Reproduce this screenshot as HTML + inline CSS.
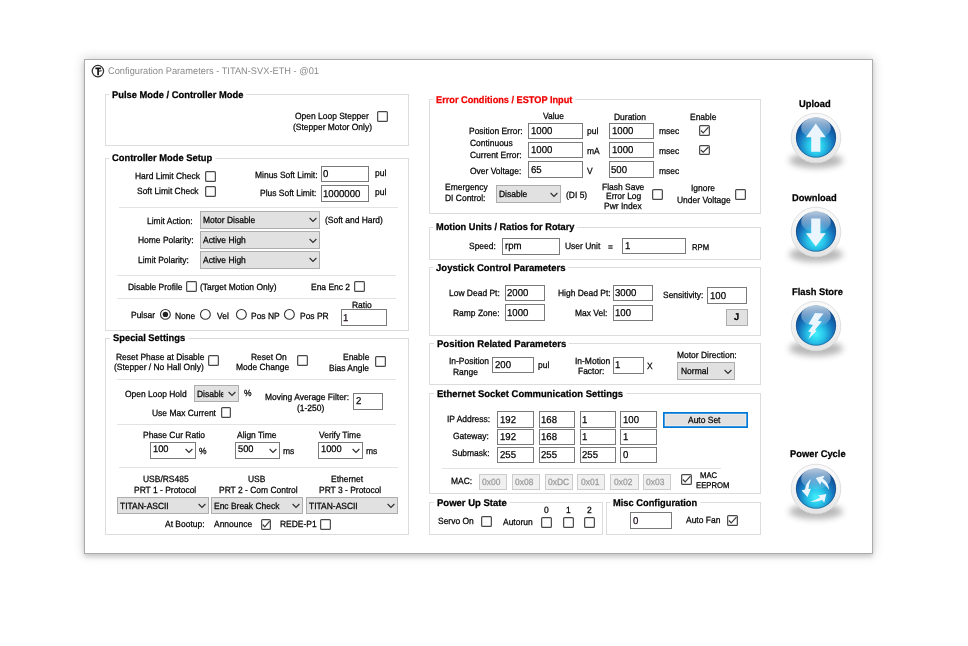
<!DOCTYPE html>
<html><head><meta charset="utf-8"><style>
html,body{margin:0;padding:0;background:#fff;width:968px;height:646px;overflow:hidden;position:relative}
body{font-family:"Liberation Sans", sans-serif;color:#000}
.t{position:absolute;white-space:nowrap;transform-origin:0 0;-webkit-text-stroke-width:0.25px;text-rendering:geometricPrecision}
.r{position:absolute;border:1px solid #7a7a7a;box-sizing:content-box}
.s{position:absolute;overflow:visible}
#win{position:absolute;left:84px;top:59px;width:787px;height:493px;border:1px solid #ababab;background:#fff;box-shadow:0 0 10px 1px rgba(0,0,0,0.16),0 3px 4px rgba(0,0,0,0.13)}
</style></head><body>
<svg width="0" height="0" style="position:absolute"><defs>
<linearGradient id="ring" x1="0" y1="0" x2="0" y2="1"><stop offset="0" stop-color="#fafafa"/><stop offset="0.6" stop-color="#f0f0f0"/><stop offset="1" stop-color="#e2e2e2"/></linearGradient>
<radialGradient id="blue" cx="50%" cy="70%" r="58%" fx="50%" fy="72%"><stop offset="0" stop-color="#44f2fa"/><stop offset="0.35" stop-color="#28c6ea"/><stop offset="0.75" stop-color="#1674bd"/><stop offset="1" stop-color="#10559c"/></radialGradient>
<linearGradient id="gloss" x1="0" y1="0" x2="0" y2="1"><stop offset="0" stop-color="#fff" stop-opacity="0.7"/><stop offset="1" stop-color="#fff" stop-opacity="0.08"/></linearGradient>
<filter id="blur" x="-50%" y="-80%" width="200%" height="260%"><feGaussianBlur stdDeviation="3"/></filter>
<g id="orb">
<ellipse cx="32" cy="54.5" rx="27" ry="7.5" fill="#3a3a3a" opacity="0.36" filter="url(#blur)"/>
<circle cx="32" cy="32" r="24.8" fill="url(#ring)" stroke="#d8d8d8" stroke-width="0.8"/>
<circle cx="32" cy="31.6" r="20.0" fill="url(#blue)"/>
<circle cx="32" cy="31.6" r="19.7" fill="none" stroke="#0a3a72" stroke-opacity="0.6" stroke-width="0.8"/>
<ellipse cx="32" cy="21.8" rx="14.8" ry="10.6" fill="url(#gloss)"/>
</g></defs></svg>
<div id="win"></div>
<svg class="s" style="left:90px;top:63px" width="16" height="16" viewBox="0 0 16 16"><circle cx="7.9" cy="8.1" r="5.7" fill="#fff" stroke="#303030" stroke-width="1.25"/><path d="M5.4 5.4 H10.9 M8.1 5.4 V12.2" stroke="#111" stroke-width="1.7" fill="none"/><path d="M8.9 8.2 L11.6 7.6" stroke="#333" stroke-width="1.1" fill="none"/></svg>
<div class="t" style="left:108px;top:67px;font-size:9.6px;line-height:9.6px;color:#8a8a8a;transform:scaleX(0.966);-webkit-text-stroke-width:0;">Configuration Parameters - TITAN-SVX-ETH - @01</div>
<div class="r" style="left:105px;top:94px;width:302px;height:50px;border-color:#dcdcdc;background:transparent;"></div>
<div class="t" style="left:112.4px;top:90.95px;font-size:9.7px;line-height:9.7px;font-weight:bold;transform:scaleX(0.965);"><span style="background:#fff;padding:0 3px 0 3px;margin-left:-3px">Pulse Mode / Controller Mode</span></div>
<div class="t" style="left:295px;top:111.8px;font-size:9px;line-height:9px;transform:scaleX(0.94);">Open Loop Stepper</div>
<svg class="s" style="left:377px;top:111px" width="11" height="11" viewBox="0 0 11 11"><rect x="0.65" y="0.65" width="9.7" height="9.7" rx="0.9" fill="#fff" stroke="#484848" stroke-width="1.2"/></svg>
<div class="t" style="left:292.7px;top:122.8px;font-size:9px;line-height:9px;transform:scaleX(0.94);">(Stepper Motor Only)</div>
<div class="r" style="left:105px;top:158px;width:302px;height:171px;border-color:#dcdcdc;background:transparent;"></div>
<div class="t" style="left:112.4px;top:153.95px;font-size:9.7px;line-height:9.7px;font-weight:bold;transform:scaleX(0.965);"><span style="background:#fff;padding:0 3px 0 3px;margin-left:-3px">Controller Mode Setup</span></div>
<div class="t" style="left:134.8px;top:171.8px;font-size:9px;line-height:9px;transform:scaleX(0.94);">Hard Limit Check</div>
<svg class="s" style="left:205px;top:171px" width="11" height="11" viewBox="0 0 11 11"><rect x="0.65" y="0.65" width="9.7" height="9.7" rx="0.9" fill="#fff" stroke="#484848" stroke-width="1.2"/></svg>
<div class="t" style="left:137px;top:186.8px;font-size:9px;line-height:9px;transform:scaleX(0.94);">Soft Limit Check</div>
<svg class="s" style="left:205px;top:186px" width="11" height="11" viewBox="0 0 11 11"><rect x="0.65" y="0.65" width="9.7" height="9.7" rx="0.9" fill="#fff" stroke="#484848" stroke-width="1.2"/></svg>
<div class="t" style="left:254.6px;top:170.8px;font-size:9px;line-height:9px;transform:scaleX(0.94);">Minus Soft Limit:</div>
<div class="r" style="left:321px;top:166px;width:46px;height:14px;border-color:#7a7a7a;background:#fff;"></div>
<div class="t" style="left:323.3px;top:169.8px;font-size:10px;line-height:10px;transform:scaleX(0.96);">0</div>
<div class="t" style="left:374.7px;top:168.8px;font-size:9px;line-height:9px;transform:scaleX(0.94);">pul</div>
<div class="t" style="left:260.1px;top:188.8px;font-size:9px;line-height:9px;transform:scaleX(0.94);">Plus Soft Limit:</div>
<div class="r" style="left:321px;top:185px;width:46px;height:15px;border-color:#7a7a7a;background:#fff;"></div>
<div class="t" style="left:323.3px;top:189.8px;font-size:10px;line-height:10px;transform:scaleX(0.96);">1000000</div>
<div class="t" style="left:374.7px;top:187.8px;font-size:9px;line-height:9px;transform:scaleX(0.94);">pul</div>
<div class="r" style="left:119px;top:206.9px;width:278.5px;height:1px;border:0;background:#e3e3e3"></div>
<div class="t" style="left:146.8px;top:216.8px;font-size:9px;line-height:9px;transform:scaleX(0.94);">Limit Action:</div>
<div class="r" style="left:200px;top:211px;width:118px;height:16px;border-color:#adadad;background:#e1e1e1;"></div>
<div class="t" style="left:203.3px;top:215.8px;font-size:9px;line-height:9px;transform:scaleX(0.94);">Motor Disable</div>
<svg class="s" style="left:309.4px;top:217.4px" width="8" height="6"><path d="M0.6 1 L4 4.4 L7.4 1" fill="none" stroke="#2a2a2a" stroke-width="1.1"/></svg>
<div class="t" style="left:324.8px;top:215.8px;font-size:9px;line-height:9px;transform:scaleX(0.94);">(Soft and Hard)</div>
<div class="t" style="left:137.7px;top:235.8px;font-size:9px;line-height:9px;transform:scaleX(0.94);">Home Polarity:</div>
<div class="r" style="left:200px;top:231px;width:118px;height:16px;border-color:#adadad;background:#e1e1e1;"></div>
<div class="t" style="left:203.3px;top:235.8px;font-size:9px;line-height:9px;transform:scaleX(0.94);">Active High</div>
<svg class="s" style="left:309.4px;top:237.5px" width="8" height="6"><path d="M0.6 1 L4 4.4 L7.4 1" fill="none" stroke="#2a2a2a" stroke-width="1.1"/></svg>
<div class="t" style="left:137.7px;top:255.8px;font-size:9px;line-height:9px;transform:scaleX(0.94);">Limit Polarity:</div>
<div class="r" style="left:200px;top:251px;width:118px;height:16px;border-color:#adadad;background:#e1e1e1;"></div>
<div class="t" style="left:203.3px;top:255.8px;font-size:9px;line-height:9px;transform:scaleX(0.94);">Active High</div>
<svg class="s" style="left:309.4px;top:257.35px" width="8" height="6"><path d="M0.6 1 L4 4.4 L7.4 1" fill="none" stroke="#2a2a2a" stroke-width="1.1"/></svg>
<div class="r" style="left:117.4px;top:274.7px;width:278.6px;height:1px;border:0;background:#e3e3e3"></div>
<div class="t" style="left:128.1px;top:282.8px;font-size:9px;line-height:9px;transform:scaleX(0.94);">Disable Profile</div>
<svg class="s" style="left:186px;top:281px" width="11" height="11" viewBox="0 0 11 11"><rect x="0.65" y="0.65" width="9.7" height="9.7" rx="0.9" fill="#fff" stroke="#484848" stroke-width="1.2"/></svg>
<div class="t" style="left:200.3px;top:282.8px;font-size:9px;line-height:9px;transform:scaleX(0.94);">(Target Motion Only)</div>
<div class="t" style="left:310.7px;top:282.8px;font-size:9px;line-height:9px;transform:scaleX(0.94);">Ena Enc 2</div>
<svg class="s" style="left:354px;top:281px" width="11" height="11" viewBox="0 0 11 11"><rect x="0.65" y="0.65" width="9.7" height="9.7" rx="0.9" fill="#fff" stroke="#484848" stroke-width="1.2"/></svg>
<div class="r" style="left:117.4px;top:297.9px;width:278.3px;height:1px;border:0;background:#e3e3e3"></div>
<div class="t" style="left:352.4px;top:300.8px;font-size:9px;line-height:9px;transform:scaleX(0.94);">Ratio</div>
<div class="t" style="left:131.4px;top:310.8px;font-size:9px;line-height:9px;transform:scaleX(0.94);">Pulsar</div>
<svg class="s" style="left:158.8px;top:308.2px" width="12.8" height="12.8"><circle cx="6.4" cy="6.4" r="4.9" fill="#fff" stroke="#333" stroke-width="1.1"/><circle cx="6.4" cy="6.4" r="2.7" fill="#222"/></svg>
<div class="t" style="left:175.2px;top:311.8px;font-size:9px;line-height:9px;transform:scaleX(0.94);">None</div>
<svg class="s" style="left:199.3px;top:308.2px" width="12.8" height="12.8"><circle cx="6.4" cy="6.4" r="4.9" fill="#fff" stroke="#333" stroke-width="1.1"/></svg>
<div class="t" style="left:216.5px;top:311.8px;font-size:9px;line-height:9px;transform:scaleX(0.94);">Vel</div>
<svg class="s" style="left:234.7px;top:308.2px" width="12.8" height="12.8"><circle cx="6.4" cy="6.4" r="4.9" fill="#fff" stroke="#333" stroke-width="1.1"/></svg>
<div class="t" style="left:251.2px;top:311.8px;font-size:9px;line-height:9px;transform:scaleX(0.94);">Pos NP</div>
<svg class="s" style="left:282.8px;top:308.2px" width="12.8" height="12.8"><circle cx="6.4" cy="6.4" r="4.9" fill="#fff" stroke="#333" stroke-width="1.1"/></svg>
<div class="t" style="left:299.5px;top:311.8px;font-size:9px;line-height:9px;transform:scaleX(0.94);">Pos PR</div>
<div class="r" style="left:341px;top:309px;width:44px;height:15px;border-color:#7a7a7a;background:#fff;"></div>
<div class="t" style="left:343.1px;top:313.8px;font-size:10px;line-height:10px;color:#1a0818;transform:scaleX(0.96);">1</div>
<div class="r" style="left:105px;top:338px;width:302px;height:195px;border-color:#dcdcdc;background:transparent;"></div>
<div class="t" style="left:112.9px;top:333.95px;font-size:9.7px;line-height:9.7px;font-weight:bold;transform:scaleX(0.965);"><span style="background:#fff;padding:0 3px 0 3px;margin-left:-3px">Special Settings</span></div>
<div class="t" style="left:116px;top:352.8px;font-size:9px;line-height:9px;transform:scaleX(0.94);">Reset Phase at Disable</div>
<div class="t" style="left:113.7px;top:362.8px;font-size:9px;line-height:9px;transform:scaleX(0.94);">(Stepper / No Hall Only)</div>
<svg class="s" style="left:208px;top:355px" width="11" height="11" viewBox="0 0 11 11"><rect x="0.65" y="0.65" width="9.7" height="9.7" rx="0.9" fill="#fff" stroke="#484848" stroke-width="1.2"/></svg>
<div class="t" style="left:251.2px;top:352.8px;font-size:9px;line-height:9px;transform:scaleX(0.94);">Reset On</div>
<div class="t" style="left:235.9px;top:362.8px;font-size:9px;line-height:9px;transform:scaleX(0.94);">Mode Change</div>
<svg class="s" style="left:297px;top:355px" width="11" height="11" viewBox="0 0 11 11"><rect x="0.65" y="0.65" width="9.7" height="9.7" rx="0.9" fill="#fff" stroke="#484848" stroke-width="1.2"/></svg>
<div class="t" style="left:342.5px;top:352.8px;font-size:9px;line-height:9px;transform:scaleX(0.94);">Enable</div>
<div class="t" style="left:329.3px;top:363.8px;font-size:9px;line-height:9px;transform:scaleX(0.94);">Bias Angle</div>
<svg class="s" style="left:375px;top:356px" width="11" height="11" viewBox="0 0 11 11"><rect x="0.65" y="0.65" width="9.7" height="9.7" rx="0.9" fill="#fff" stroke="#484848" stroke-width="1.2"/></svg>
<div class="r" style="left:117.4px;top:378.6px;width:278.3px;height:1px;border:0;background:#e3e3e3"></div>
<div class="t" style="left:124.8px;top:389.8px;font-size:9px;line-height:9px;transform:scaleX(0.94);">Open Loop Hold</div>
<div class="r" style="left:194px;top:385px;width:43px;height:15px;border-color:#adadad;background:#e1e1e1;"></div>
<div class="t" style="left:197px;top:389.8px;font-size:9px;line-height:9px;transform:scaleX(0.94);"><span style="display:inline-block;width:28px;overflow:hidden;vertical-align:top">Disable</span></div>
<svg class="s" style="left:228.2px;top:391.1px" width="8" height="6"><path d="M0.6 1 L4 4.4 L7.4 1" fill="none" stroke="#2a2a2a" stroke-width="1.1"/></svg>
<div class="t" style="left:244.1px;top:388.8px;font-size:9px;line-height:9px;transform:scaleX(0.94);">%</div>
<div class="t" style="left:264.8px;top:392.8px;font-size:9px;line-height:9px;transform:scaleX(0.94);">Moving Average Filter:</div>
<div class="t" style="left:297px;top:403.8px;font-size:9px;line-height:9px;transform:scaleX(0.94);">(1-250)</div>
<div class="r" style="left:353px;top:393px;width:28px;height:15px;border-color:#7a7a7a;background:#fff;"></div>
<div class="t" style="left:355.5px;top:396.8px;font-size:10px;line-height:10px;transform:scaleX(0.96);">2</div>
<div class="t" style="left:152.1px;top:408.8px;font-size:9px;line-height:9px;transform:scaleX(0.94);">Use Max Current</div>
<svg class="s" style="left:221px;top:407px" width="10" height="11" viewBox="0 0 10 11"><rect x="0.65" y="0.65" width="8.7" height="9.7" rx="0.9" fill="#fff" stroke="#484848" stroke-width="1.2"/></svg>
<div class="r" style="left:117.4px;top:424px;width:278.3px;height:1px;border:0;background:#e3e3e3"></div>
<div class="t" style="left:142.6px;top:430.8px;font-size:9px;line-height:9px;transform:scaleX(0.94);">Phase Cur Ratio</div>
<div class="t" style="left:236.9px;top:430.8px;font-size:9px;line-height:9px;transform:scaleX(0.94);">Align Time</div>
<div class="t" style="left:319.3px;top:430.8px;font-size:9px;line-height:9px;transform:scaleX(0.94);">Verify Time</div>
<div class="r" style="left:150px;top:442px;width:44px;height:15px;border-color:#7a7a7a;background:#fff;"></div>
<div class="t" style="left:153.4px;top:445px;font-size:9.6px;line-height:9.6px;transform:scaleX(0.97);">100</div>
<svg class="s" style="left:184.9px;top:447.85px" width="8" height="6"><path d="M0.6 1 L4 4.4 L7.4 1" fill="none" stroke="#2a2a2a" stroke-width="1.1"/></svg>
<div class="t" style="left:199.2px;top:446.8px;font-size:9px;line-height:9px;transform:scaleX(0.94);">%</div>
<div class="r" style="left:235px;top:442px;width:43px;height:15px;border-color:#7a7a7a;background:#fff;"></div>
<div class="t" style="left:237.7px;top:445px;font-size:9.6px;line-height:9.6px;transform:scaleX(0.97);">500</div>
<svg class="s" style="left:269.1px;top:447.85px" width="8" height="6"><path d="M0.6 1 L4 4.4 L7.4 1" fill="none" stroke="#2a2a2a" stroke-width="1.1"/></svg>
<div class="t" style="left:283.3px;top:446.8px;font-size:9px;line-height:9px;transform:scaleX(0.94);">ms</div>
<div class="r" style="left:318px;top:442px;width:43px;height:15px;border-color:#7a7a7a;background:#fff;"></div>
<div class="t" style="left:320.7px;top:445px;font-size:9.6px;line-height:9.6px;transform:scaleX(0.97);">1000</div>
<svg class="s" style="left:352px;top:447.85px" width="8" height="6"><path d="M0.6 1 L4 4.4 L7.4 1" fill="none" stroke="#2a2a2a" stroke-width="1.1"/></svg>
<div class="t" style="left:366.4px;top:446.8px;font-size:9px;line-height:9px;transform:scaleX(0.94);">ms</div>
<div class="r" style="left:119px;top:466.5px;width:278.9px;height:1px;border:0;background:#e3e3e3"></div>
<div class="t" style="left:142.6px;top:474.8px;font-size:9px;line-height:9px;transform:scaleX(0.94);">USB/RS485</div>
<div class="t" style="left:248.1px;top:474.8px;font-size:9px;line-height:9px;transform:scaleX(0.94);">USB</div>
<div class="t" style="left:331.3px;top:474.8px;font-size:9px;line-height:9px;transform:scaleX(0.94);">Ethernet</div>
<div class="t" style="left:133.9px;top:485.8px;font-size:9px;line-height:9px;transform:scaleX(0.94);">PRT 1 - Protocol</div>
<div class="t" style="left:219.3px;top:485.8px;font-size:9px;line-height:9px;transform:scaleX(0.94);">PRT 2 - Com Control</div>
<div class="t" style="left:319.4px;top:485.8px;font-size:9px;line-height:9px;transform:scaleX(0.94);">PRT 3 - Protocol</div>
<div class="r" style="left:117px;top:497px;width:90px;height:15px;border-color:#adadad;background:#e1e1e1;"></div>
<div class="t" style="left:120.3px;top:501.8px;font-size:9px;line-height:9px;transform:scaleX(0.94);">TITAN-ASCII</div>
<svg class="s" style="left:198px;top:503.25px" width="8" height="6"><path d="M0.6 1 L4 4.4 L7.4 1" fill="none" stroke="#2a2a2a" stroke-width="1.1"/></svg>
<div class="r" style="left:211px;top:497px;width:90px;height:15px;border-color:#adadad;background:#e1e1e1;"></div>
<div class="t" style="left:214.4px;top:501.8px;font-size:9px;line-height:9px;transform:scaleX(0.94);">Enc Break Check</div>
<svg class="s" style="left:292.2px;top:503.25px" width="8" height="6"><path d="M0.6 1 L4 4.4 L7.4 1" fill="none" stroke="#2a2a2a" stroke-width="1.1"/></svg>
<div class="r" style="left:306px;top:497px;width:90px;height:15px;border-color:#adadad;background:#e1e1e1;"></div>
<div class="t" style="left:309.2px;top:501.8px;font-size:9px;line-height:9px;transform:scaleX(0.94);">TITAN-ASCII</div>
<svg class="s" style="left:386.8px;top:503.25px" width="8" height="6"><path d="M0.6 1 L4 4.4 L7.4 1" fill="none" stroke="#2a2a2a" stroke-width="1.1"/></svg>
<div class="t" style="left:165px;top:519.8px;font-size:9px;line-height:9px;transform:scaleX(0.94);">At Bootup:</div>
<div class="t" style="left:214.4px;top:519.8px;font-size:9px;line-height:9px;transform:scaleX(0.94);">Announce</div>
<svg class="s" style="left:261px;top:519px" width="10" height="11" viewBox="0 0 10 11"><rect x="0.65" y="0.65" width="8.7" height="9.7" rx="0.9" fill="#fff" stroke="#484848" stroke-width="1.2"/><path d="M1.7 5.5 L3.8 7.92 L8.6 2.2" fill="none" stroke="#383838" stroke-width="1.15"/></svg>
<div class="t" style="left:280.2px;top:519.8px;font-size:9px;line-height:9px;transform:scaleX(0.94);">REDE-P1</div>
<svg class="s" style="left:320px;top:519px" width="11" height="11" viewBox="0 0 11 11"><rect x="0.65" y="0.65" width="9.7" height="9.7" rx="0.9" fill="#fff" stroke="#484848" stroke-width="1.2"/></svg>
<div class="r" style="left:429px;top:99px;width:330px;height:113px;border-color:#dcdcdc;background:transparent;"></div>
<div class="t" style="left:436.2px;top:95.95px;font-size:9.7px;line-height:9.7px;font-weight:bold;color:#f00000;transform:scaleX(0.948);"><span style="background:#fff;padding:0 3px 0 3px;margin-left:-3px">Error Conditions / ESTOP Input</span></div>
<div class="t" style="left:542.7px;top:111.8px;font-size:9px;line-height:9px;transform:scaleX(0.94);">Value</div>
<div class="t" style="left:613.8px;top:112.8px;font-size:9px;line-height:9px;transform:scaleX(0.94);">Duration</div>
<div class="t" style="left:689.8px;top:112.8px;font-size:9px;line-height:9px;transform:scaleX(0.94);">Enable</div>
<div class="t" style="left:468.8px;top:126.8px;font-size:9px;line-height:9px;transform:scaleX(0.94);">Position Error:</div>
<div class="r" style="left:528px;top:123px;width:53px;height:14px;border-color:#7a7a7a;background:#fff;"></div>
<div class="t" style="left:530.6px;top:126.8px;font-size:10px;line-height:10px;transform:scaleX(0.96);">1000</div>
<div class="t" style="left:587.4px;top:126.8px;font-size:9px;line-height:9px;transform:scaleX(0.94);">pul</div>
<div class="r" style="left:609px;top:123px;width:43px;height:14px;border-color:#7a7a7a;background:#fff;"></div>
<div class="t" style="left:611.5px;top:126.8px;font-size:10px;line-height:10px;transform:scaleX(0.96);">1000</div>
<div class="t" style="left:658.8px;top:126.8px;font-size:9px;line-height:9px;transform:scaleX(0.94);">msec</div>
<svg class="s" style="left:699px;top:125px" width="11" height="11" viewBox="0 0 11 11"><rect x="0.65" y="0.65" width="9.7" height="9.7" rx="0.9" fill="#fff" stroke="#484848" stroke-width="1.2"/><path d="M1.87 5.5 L4.18 7.92 L9.46 2.2" fill="none" stroke="#383838" stroke-width="1.15"/></svg>
<div class="t" style="left:469.6px;top:138.8px;font-size:9px;line-height:9px;transform:scaleX(0.94);">Continuous</div>
<div class="t" style="left:469.6px;top:150.8px;font-size:9px;line-height:9px;transform:scaleX(0.94);">Current Error:</div>
<div class="r" style="left:528px;top:142px;width:53px;height:14px;border-color:#7a7a7a;background:#fff;"></div>
<div class="t" style="left:530.6px;top:145.8px;font-size:10px;line-height:10px;transform:scaleX(0.96);">1000</div>
<div class="t" style="left:587.4px;top:146.8px;font-size:9px;line-height:9px;transform:scaleX(0.94);">mA</div>
<div class="r" style="left:609px;top:142px;width:43px;height:14px;border-color:#7a7a7a;background:#fff;"></div>
<div class="t" style="left:611.5px;top:145.8px;font-size:10px;line-height:10px;transform:scaleX(0.96);">1000</div>
<div class="t" style="left:658.8px;top:146.8px;font-size:9px;line-height:9px;transform:scaleX(0.94);">msec</div>
<svg class="s" style="left:699px;top:145px" width="11" height="10" viewBox="0 0 11 10"><rect x="0.65" y="0.65" width="9.7" height="8.7" rx="0.9" fill="#fff" stroke="#484848" stroke-width="1.2"/><path d="M1.87 5 L4.18 7.2 L9.46 2" fill="none" stroke="#383838" stroke-width="1.15"/></svg>
<div class="t" style="left:469.6px;top:166.8px;font-size:9px;line-height:9px;transform:scaleX(0.94);">Over Voltage:</div>
<div class="r" style="left:528px;top:161px;width:53px;height:15px;border-color:#7a7a7a;background:#fff;"></div>
<div class="t" style="left:530.6px;top:165.8px;font-size:10px;line-height:10px;transform:scaleX(0.96);">65</div>
<div class="t" style="left:587.3px;top:166.8px;font-size:9px;line-height:9px;transform:scaleX(0.94);">V</div>
<div class="r" style="left:609px;top:161px;width:43px;height:15px;border-color:#7a7a7a;background:#fff;"></div>
<div class="t" style="left:611.4px;top:165.8px;font-size:10px;line-height:10px;transform:scaleX(0.96);">500</div>
<div class="t" style="left:658.8px;top:166.8px;font-size:9px;line-height:9px;transform:scaleX(0.94);">msec</div>
<div class="t" style="left:444.8px;top:182.8px;font-size:9px;line-height:9px;transform:scaleX(0.94);">Emergency</div>
<div class="t" style="left:444.8px;top:193.8px;font-size:9px;line-height:9px;transform:scaleX(0.94);">DI Control:</div>
<div class="r" style="left:496px;top:185px;width:63px;height:16px;border-color:#adadad;background:#e1e1e1;"></div>
<div class="t" style="left:499.4px;top:189.8px;font-size:9px;line-height:9px;transform:scaleX(0.94);">Disable</div>
<svg class="s" style="left:550.3px;top:191.8px" width="8" height="6"><path d="M0.6 1 L4 4.4 L7.4 1" fill="none" stroke="#2a2a2a" stroke-width="1.1"/></svg>
<div class="t" style="left:566.3px;top:190.8px;font-size:9px;line-height:9px;transform:scaleX(0.94);">(DI 5)</div>
<div class="t" style="left:602.1px;top:182.8px;font-size:9px;line-height:9px;transform:scaleX(0.94);">Flash Save</div>
<div class="t" style="left:606px;top:191.8px;font-size:9px;line-height:9px;transform:scaleX(0.94);">Error Log</div>
<div class="t" style="left:604.3px;top:201.8px;font-size:9px;line-height:9px;transform:scaleX(0.94);">Pwr Index</div>
<svg class="s" style="left:652px;top:189px" width="11" height="11" viewBox="0 0 11 11"><rect x="0.65" y="0.65" width="9.7" height="9.7" rx="0.9" fill="#fff" stroke="#484848" stroke-width="1.2"/></svg>
<div class="t" style="left:690.6px;top:183.8px;font-size:9px;line-height:9px;transform:scaleX(0.94);">Ignore</div>
<div class="t" style="left:677px;top:195.8px;font-size:9px;line-height:9px;transform:scaleX(0.94);">Under Voltage</div>
<svg class="s" style="left:735px;top:189px" width="11" height="11" viewBox="0 0 11 11"><rect x="0.65" y="0.65" width="9.7" height="9.7" rx="0.9" fill="#fff" stroke="#484848" stroke-width="1.2"/></svg>
<div class="r" style="left:429px;top:227px;width:330px;height:31px;border-color:#dcdcdc;background:transparent;"></div>
<div class="t" style="left:436.2px;top:222.95px;font-size:9.7px;line-height:9.7px;font-weight:bold;transform:scaleX(0.953);"><span style="background:#fff;padding:0 3px 0 3px;margin-left:-3px">Motion Units / Ratios for Rotary</span></div>
<div class="t" style="left:468.8px;top:241.8px;font-size:9px;line-height:9px;transform:scaleX(0.94);">Speed:</div>
<div class="r" style="left:502px;top:238px;width:56px;height:15px;border-color:#7a7a7a;background:#fff;"></div>
<div class="t" style="left:504.7px;top:241.8px;font-size:10px;line-height:10px;transform:scaleX(0.96);">rpm</div>
<div class="t" style="left:565.2px;top:241.8px;font-size:9px;line-height:9px;transform:scaleX(0.94);">User Unit</div>
<div class="t" style="left:608.2px;top:242.8px;font-size:9px;line-height:9px;transform:scaleX(0.94);">=</div>
<div class="r" style="left:622px;top:238px;width:62px;height:14px;border-color:#7a7a7a;background:#fff;"></div>
<div class="t" style="left:624.6px;top:241.8px;font-size:10px;line-height:10px;transform:scaleX(0.96);">1</div>
<div class="t" style="left:691.9px;top:243.7px;font-size:8.2px;line-height:8.2px;transform:scaleX(0.94);">RPM</div>
<div class="r" style="left:429px;top:267px;width:330px;height:67px;border-color:#dcdcdc;background:transparent;"></div>
<div class="t" style="left:436.2px;top:263.95px;font-size:9.7px;line-height:9.7px;font-weight:bold;transform:scaleX(0.986);"><span style="background:#fff;padding:0 3px 0 3px;margin-left:-3px">Joystick Control Parameters</span></div>
<div class="t" style="left:448.8px;top:288.8px;font-size:9px;line-height:9px;transform:scaleX(0.94);">Low Dead Pt:</div>
<div class="r" style="left:505px;top:285px;width:38px;height:14px;border-color:#7a7a7a;background:#fff;"></div>
<div class="t" style="left:507.3px;top:288.8px;font-size:10px;line-height:10px;transform:scaleX(0.96);">2000</div>
<div class="t" style="left:452.9px;top:308.8px;font-size:9px;line-height:9px;transform:scaleX(0.94);">Ramp Zone:</div>
<div class="r" style="left:505px;top:304px;width:38px;height:15px;border-color:#7a7a7a;background:#fff;"></div>
<div class="t" style="left:507.3px;top:308.8px;font-size:10px;line-height:10px;transform:scaleX(0.96);">1000</div>
<div class="t" style="left:558px;top:288.8px;font-size:9px;line-height:9px;transform:scaleX(0.94);">High Dead Pt:</div>
<div class="r" style="left:613px;top:285px;width:38px;height:14px;border-color:#7a7a7a;background:#fff;"></div>
<div class="t" style="left:615.2px;top:288.8px;font-size:10px;line-height:10px;transform:scaleX(0.96);">3000</div>
<div class="t" style="left:574.7px;top:308.8px;font-size:9px;line-height:9px;transform:scaleX(0.94);">Max Vel:</div>
<div class="r" style="left:613px;top:305px;width:38px;height:14px;border-color:#7a7a7a;background:#fff;"></div>
<div class="t" style="left:615.2px;top:308.8px;font-size:10px;line-height:10px;transform:scaleX(0.96);">100</div>
<div class="t" style="left:662.7px;top:290.8px;font-size:9px;line-height:9px;transform:scaleX(0.94);">Sensitivity:</div>
<div class="r" style="left:707px;top:287px;width:38px;height:15px;border-color:#7a7a7a;background:#fff;"></div>
<div class="t" style="left:709.5px;top:291.8px;font-size:10px;line-height:10px;transform:scaleX(0.96);">100</div>
<div class="r" style="left:726px;top:309px;width:20px;height:15px;border-color:#adadad;background:#e1e1e1;"></div>
<div class="t" style="left:733.6px;top:312.95px;font-size:9.7px;line-height:9.7px;font-weight:bold;transform:scaleX(0.965);">J</div>
<div class="r" style="left:429px;top:343px;width:330px;height:40px;border-color:#dcdcdc;background:transparent;"></div>
<div class="t" style="left:436.5px;top:339.95px;font-size:9.7px;line-height:9.7px;font-weight:bold;transform:scaleX(0.984);"><span style="background:#fff;padding:0 3px 0 3px;margin-left:-3px">Position Related Parameters</span></div>
<div class="t" style="left:448.8px;top:356.8px;font-size:9px;line-height:9px;transform:scaleX(0.94);">In-Position</div>
<div class="t" style="left:452.9px;top:367.8px;font-size:9px;line-height:9px;transform:scaleX(0.94);">Range</div>
<div class="r" style="left:492px;top:357px;width:40px;height:14px;border-color:#7a7a7a;background:#fff;"></div>
<div class="t" style="left:494.6px;top:360.8px;font-size:10px;line-height:10px;transform:scaleX(0.96);">200</div>
<div class="t" style="left:537.9px;top:360.8px;font-size:9px;line-height:9px;transform:scaleX(0.94);">pul</div>
<div class="t" style="left:575.2px;top:356.8px;font-size:9px;line-height:9px;transform:scaleX(0.94);">In-Motion</div>
<div class="t" style="left:577.9px;top:366.8px;font-size:9px;line-height:9px;transform:scaleX(0.94);">Factor:</div>
<div class="r" style="left:613px;top:357px;width:29px;height:15px;border-color:#7a7a7a;background:#fff;"></div>
<div class="t" style="left:615.1px;top:360.8px;font-size:10px;line-height:10px;transform:scaleX(0.96);">1</div>
<div class="t" style="left:647.1px;top:361.8px;font-size:9px;line-height:9px;transform:scaleX(0.94);">X</div>
<div class="t" style="left:676.8px;top:350.8px;font-size:9px;line-height:9px;transform:scaleX(0.94);">Motor Direction:</div>
<div class="r" style="left:677px;top:362px;width:56px;height:16px;border-color:#adadad;background:#e1e1e1;"></div>
<div class="t" style="left:680.7px;top:366.8px;font-size:9px;line-height:9px;transform:scaleX(0.94);">Normal</div>
<svg class="s" style="left:724.1px;top:368.55px" width="8" height="6"><path d="M0.6 1 L4 4.4 L7.4 1" fill="none" stroke="#2a2a2a" stroke-width="1.1"/></svg>
<div class="r" style="left:429px;top:393px;width:330px;height:99px;border-color:#dcdcdc;background:transparent;"></div>
<div class="t" style="left:436.5px;top:389.95px;font-size:9.7px;line-height:9.7px;font-weight:bold;transform:scaleX(0.976);"><span style="background:#fff;padding:0 3px 0 3px;margin-left:-3px">Ethernet Socket Communication Settings</span></div>
<div class="t" style="left:446.9px;top:414.8px;font-size:9px;line-height:9px;transform:scaleX(0.94);">IP Address:</div>
<div class="t" style="left:452.9px;top:431.8px;font-size:9px;line-height:9px;transform:scaleX(0.94);">Gateway:</div>
<div class="t" style="left:452px;top:448.8px;font-size:9px;line-height:9px;transform:scaleX(0.94);">Submask:</div>
<div class="r" style="left:497px;top:411px;width:35px;height:15px;border-color:#7a7a7a;background:#fff;"></div>
<div class="t" style="left:499.8px;top:415.8px;font-size:10px;line-height:10px;transform:scaleX(0.96);">192</div>
<div class="r" style="left:539px;top:411px;width:34px;height:15px;border-color:#7a7a7a;background:#fff;"></div>
<div class="t" style="left:541.3px;top:415.8px;font-size:10px;line-height:10px;transform:scaleX(0.96);">168</div>
<div class="r" style="left:580px;top:411px;width:34px;height:15px;border-color:#7a7a7a;background:#fff;"></div>
<div class="t" style="left:582.3px;top:415.8px;font-size:10px;line-height:10px;transform:scaleX(0.96);">1</div>
<div class="r" style="left:620px;top:411px;width:35px;height:15px;border-color:#7a7a7a;background:#fff;"></div>
<div class="t" style="left:622.9px;top:415.8px;font-size:10px;line-height:10px;transform:scaleX(0.96);">100</div>
<div class="r" style="left:497px;top:429px;width:35px;height:14px;border-color:#7a7a7a;background:#fff;"></div>
<div class="t" style="left:499.8px;top:432.8px;font-size:10px;line-height:10px;transform:scaleX(0.96);">192</div>
<div class="r" style="left:539px;top:429px;width:34px;height:14px;border-color:#7a7a7a;background:#fff;"></div>
<div class="t" style="left:541.3px;top:432.8px;font-size:10px;line-height:10px;transform:scaleX(0.96);">168</div>
<div class="r" style="left:580px;top:429px;width:34px;height:14px;border-color:#7a7a7a;background:#fff;"></div>
<div class="t" style="left:582.3px;top:432.8px;font-size:10px;line-height:10px;transform:scaleX(0.96);">1</div>
<div class="r" style="left:620px;top:429px;width:35px;height:14px;border-color:#7a7a7a;background:#fff;"></div>
<div class="t" style="left:622.9px;top:432.8px;font-size:10px;line-height:10px;transform:scaleX(0.96);">1</div>
<div class="r" style="left:497px;top:447px;width:35px;height:14px;border-color:#7a7a7a;background:#fff;"></div>
<div class="t" style="left:499.8px;top:450.8px;font-size:10px;line-height:10px;transform:scaleX(0.96);">255</div>
<div class="r" style="left:539px;top:447px;width:34px;height:14px;border-color:#7a7a7a;background:#fff;"></div>
<div class="t" style="left:541.3px;top:450.8px;font-size:10px;line-height:10px;transform:scaleX(0.96);">255</div>
<div class="r" style="left:580px;top:447px;width:34px;height:14px;border-color:#7a7a7a;background:#fff;"></div>
<div class="t" style="left:582.3px;top:450.8px;font-size:10px;line-height:10px;transform:scaleX(0.96);">255</div>
<div class="r" style="left:620px;top:447px;width:35px;height:14px;border-color:#7a7a7a;background:#fff;"></div>
<div class="t" style="left:622.9px;top:450.8px;font-size:10px;line-height:10px;transform:scaleX(0.96);">0</div>
<div class="r" style="left:663px;top:412px;width:83px;height:14px;border-color:#0078d7;background:#e1e1e1;box-shadow:inset 0 0 0 0.7px #0078d7,inset 0 0 0 1.6px #f2f2f2;"></div>
<div class="t" style="left:688px;top:415.8px;font-size:9px;line-height:9px;transform:scaleX(0.94);">Auto Set</div>
<div class="r" style="left:442.1px;top:468.1px;width:278.6px;height:1px;border:0;background:#e3e3e3"></div>
<div class="t" style="left:450.5px;top:476.8px;font-size:9px;line-height:9px;transform:scaleX(0.94);">MAC:</div>
<div class="r" style="left:479px;top:474px;width:26px;height:14px;border-color:#cccccc;background:#f0f0f0;"></div>
<div class="t" style="left:482.3px;top:477.8px;font-size:9px;line-height:9px;color:#9a9a9a;transform:scaleX(0.94);">0x00</div>
<div class="r" style="left:512px;top:474px;width:26px;height:14px;border-color:#cccccc;background:#f0f0f0;"></div>
<div class="t" style="left:515px;top:477.8px;font-size:9px;line-height:9px;color:#9a9a9a;transform:scaleX(0.94);">0x08</div>
<div class="r" style="left:545px;top:474px;width:26px;height:14px;border-color:#cccccc;background:#f0f0f0;"></div>
<div class="t" style="left:547.9px;top:477.8px;font-size:9px;line-height:9px;color:#9a9a9a;transform:scaleX(0.94);">0xDC</div>
<div class="r" style="left:577px;top:474px;width:26px;height:14px;border-color:#cccccc;background:#f0f0f0;"></div>
<div class="t" style="left:580.5px;top:477.8px;font-size:9px;line-height:9px;color:#9a9a9a;transform:scaleX(0.94);">0x01</div>
<div class="r" style="left:610px;top:474px;width:27px;height:14px;border-color:#cccccc;background:#f0f0f0;"></div>
<div class="t" style="left:613.5px;top:477.8px;font-size:9px;line-height:9px;color:#9a9a9a;transform:scaleX(0.94);">0x02</div>
<div class="r" style="left:643px;top:474px;width:26px;height:14px;border-color:#cccccc;background:#f0f0f0;"></div>
<div class="t" style="left:646.2px;top:477.8px;font-size:9px;line-height:9px;color:#9a9a9a;transform:scaleX(0.94);">0x03</div>
<svg class="s" style="left:681px;top:474px" width="11" height="11" viewBox="0 0 11 11"><rect x="0.65" y="0.65" width="9.7" height="9.7" rx="0.9" fill="#fff" stroke="#484848" stroke-width="1.2"/><path d="M1.87 5.5 L4.18 7.92 L9.46 2.2" fill="none" stroke="#383838" stroke-width="1.15"/></svg>
<div class="t" style="left:700.3px;top:471.7px;font-size:8.2px;line-height:8.2px;transform:scaleX(0.94);">MAC</div>
<div class="t" style="left:696.2px;top:481.7px;font-size:8.2px;line-height:8.2px;transform:scaleX(0.94);">EEPROM</div>
<div class="r" style="left:429px;top:502px;width:172px;height:31px;border-color:#dcdcdc;background:transparent;"></div>
<div class="t" style="left:436.5px;top:498.95px;font-size:9.7px;line-height:9.7px;font-weight:bold;transform:scaleX(0.982);"><span style="background:#fff;padding:0 3px 0 3px;margin-left:-3px">Power Up State</span></div>
<div class="t" style="left:438.4px;top:516.8px;font-size:9px;line-height:9px;transform:scaleX(0.94);">Servo On</div>
<svg class="s" style="left:481px;top:516px" width="11" height="11" viewBox="0 0 11 11"><rect x="0.65" y="0.65" width="9.7" height="9.7" rx="0.9" fill="#fff" stroke="#484848" stroke-width="1.2"/></svg>
<div class="t" style="left:502.7px;top:517.8px;font-size:9px;line-height:9px;transform:scaleX(0.94);">Autorun</div>
<svg class="s" style="left:541px;top:517px" width="11" height="11" viewBox="0 0 11 11"><rect x="0.65" y="0.65" width="9.7" height="9.7" rx="0.9" fill="#fff" stroke="#484848" stroke-width="1.2"/></svg>
<svg class="s" style="left:563px;top:517px" width="11" height="11" viewBox="0 0 11 11"><rect x="0.65" y="0.65" width="9.7" height="9.7" rx="0.9" fill="#fff" stroke="#484848" stroke-width="1.2"/></svg>
<svg class="s" style="left:584px;top:517px" width="11" height="11" viewBox="0 0 11 11"><rect x="0.65" y="0.65" width="9.7" height="9.7" rx="0.9" fill="#fff" stroke="#484848" stroke-width="1.2"/></svg>
<div class="t" style="left:543.9px;top:505.8px;font-size:9px;line-height:9px;transform:scaleX(0.94);">0</div>
<div class="t" style="left:565.5px;top:505.8px;font-size:9px;line-height:9px;transform:scaleX(0.94);">1</div>
<div class="t" style="left:587.3px;top:505.8px;font-size:9px;line-height:9px;transform:scaleX(0.94);">2</div>
<div class="r" style="left:606px;top:502px;width:153px;height:31px;border-color:#dcdcdc;background:transparent;"></div>
<div class="t" style="left:612.9px;top:498.95px;font-size:9.7px;line-height:9.7px;font-weight:bold;transform:scaleX(0.96);"><span style="background:#fff;padding:0 3px 0 3px;margin-left:-3px">Misc Configuration</span></div>
<div class="r" style="left:630px;top:512px;width:40px;height:15px;border-color:#7a7a7a;background:#fff;"></div>
<div class="t" style="left:632.6px;top:516.8px;font-size:10px;line-height:10px;color:#1a0818;transform:scaleX(0.96);">0</div>
<div class="t" style="left:685.5px;top:515.8px;font-size:9px;line-height:9px;transform:scaleX(0.94);">Auto Fan</div>
<svg class="s" style="left:727px;top:515px" width="11" height="11" viewBox="0 0 11 11"><rect x="0.65" y="0.65" width="9.7" height="9.7" rx="0.9" fill="#fff" stroke="#484848" stroke-width="1.2"/><path d="M1.87 5.5 L4.18 7.92 L9.46 2.2" fill="none" stroke="#383838" stroke-width="1.15"/></svg>
<div class="t" style="left:799.4px;top:99.95px;font-size:9.7px;line-height:9.7px;font-weight:bold;transform:scaleX(0.965);">Upload</div>
<svg class="s" style="left:783.6px;top:106.1px" width="64" height="72" viewBox="0 0 64 72"><use href="#orb"/><path d="M31.8 17.6 L41.8 31.3 L36.4 31.3 L36.4 45.7 L27.2 45.7 L27.2 31.3 L21.9 31.3 Z" fill="#eaf5fd"/></svg>
<div class="t" style="left:791.6px;top:193.95px;font-size:9.7px;line-height:9.7px;font-weight:bold;transform:scaleX(0.965);">Download</div>
<svg class="s" style="left:783.6px;top:200.4px" width="64" height="72" viewBox="0 0 64 72"><use href="#orb"/><path d="M31.8 46.6 L41.8 33.2 L36.4 33.2 L36.4 18.6 L27.2 18.6 L27.2 33.2 L21.9 33.2 Z" fill="#eaf5fd"/></svg>
<div class="t" style="left:792px;top:287.95px;font-size:9.7px;line-height:9.7px;font-weight:bold;transform:scaleX(0.965);">Flash Store</div>
<svg class="s" style="left:783.5px;top:294.1px" width="64" height="72" viewBox="0 0 64 72"><use href="#orb"/><path d="M31 19 L39.5 19.4 L33.9 26.8 L37.8 27.5 L31 35.9 L32.6 36.9 L24.5 45 L27.1 38.2 L24.2 37.6 L29.1 31.1 L24.5 30.1 Z" fill="#eaf5fd"/></svg>
<div class="t" style="left:789.5px;top:449.95px;font-size:9.7px;line-height:9.7px;font-weight:bold;transform:scaleX(0.965);">Power Cycle</div>
<svg class="s" style="left:783.5px;top:456.9px" width="64" height="72" viewBox="0 0 64 72"><use href="#orb"/><g fill="#eaf5fd"><path d="M31.7 20.9 L40.6 18.6 L38.9 21.8 Q44.5 25.5 45.3 33 Q41.5 27.5 37.4 24.6 L36.2 27.8 Z"/><path d="M23.5 40 L17.6 33.4 L21 32.6 Q21.5 26 27.2 22 Q24.5 27 24.6 32 L27 31.8 Z"/><path d="M42.3 37 L40.2 45.8 L38.3 43 Q32 45.5 26.3 44.5 Q32 43 36.3 40.2 L33.8 38.6 Z"/></g></svg>
</body></html>
